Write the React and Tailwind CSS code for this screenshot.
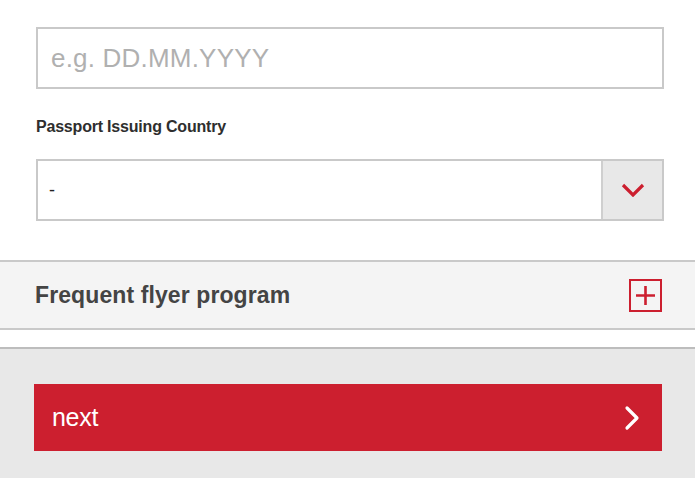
export default function App() {
  return (
    <div className="w-[695px] h-[494px] bg-white font-['Liberation_Sans',Arial,sans-serif] overflow-hidden">
      <div className="pt-[27px] pl-[36px] pr-[31px]">
        <div className="h-[62px] border-2 border-[#c9c9c9] flex items-center px-[13px]">
          <span className="text-[26px] text-[#b0b0b0] tracking-[0.2px]">e.g. DD.MM.YYYY</span>
        </div>
        <div className="mt-[28px] text-[16px] font-bold text-[#2e2e2e] tracking-[-0.2px] leading-[20px]">
          Passport Issuing Country
        </div>
        <div className="mt-[22px] h-[62px] border-2 border-[#c9c9c9] flex">
          <div className="flex-1 flex items-center px-[11px] text-[18px] text-[#222]">-</div>
          <div className="w-[61px] bg-[#e8e8e8] border-l-2 border-[#cfcfcf] flex items-center justify-center">
            <svg width="24" height="14" viewBox="0 0 24 14">
              <path d="M2 2 L12 12 L22 2" fill="none" stroke="#cc1f2f" strokeWidth="3.2" />
            </svg>
          </div>
        </div>
      </div>

      <div className="mt-[39px] h-[70px] bg-[#f4f4f4] border-y-2 border-[#c9c9c9] flex items-center justify-between pl-[35px] pr-[33px]">
        <span className="text-[23px] font-bold text-[#444] tracking-[0.1px]">Frequent flyer program</span>
        <div className="w-[33px] h-[33px] border-2 border-[#cc1f2f] flex items-center justify-center">
          <svg width="23" height="23" viewBox="0 0 23 23">
            <path d="M11.5 2 V21 M2 11.5 H21" stroke="#cc1f2f" strokeWidth="2.6" />
          </svg>
        </div>
      </div>

      <div className="mt-[17px] h-[131px] bg-[#e8e8e8] border-t-2 border-[#bdbdbd] pt-[35px] pl-[34px] pr-[33px]">
        <div className="h-[67px] bg-[#cc1f2f] flex items-center justify-between pl-[18px] pr-[22px]">
          <span className="text-[25px] text-white tracking-[-0.3px]">next</span>
          <svg width="16" height="26" viewBox="0 0 16 26">
            <path d="M3 3 L13 13 L3 23" fill="none" stroke="white" strokeWidth="3.2" strokeLinecap="round" strokeLinejoin="round" />
          </svg>
        </div>
      </div>
    </div>
  );
}
